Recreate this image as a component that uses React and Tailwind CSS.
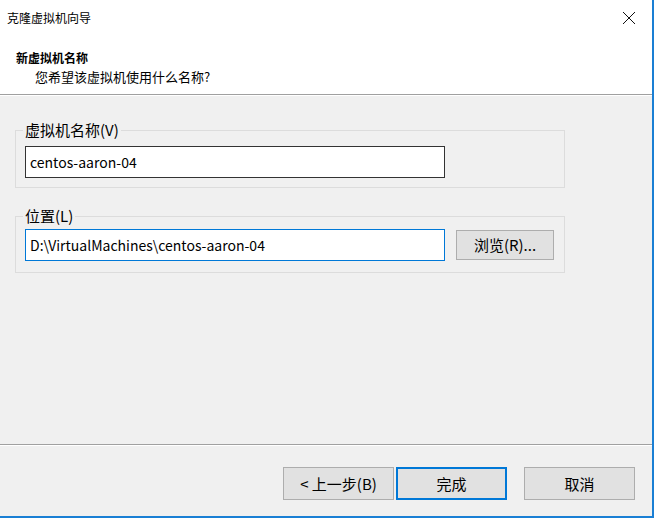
import React from "react";

const font = "font-['Noto_Sans_CJK_SC',sans-serif]";

const CloseIcon = () => (
  <svg width="14" height="14" viewBox="0 0 14 14" className="block">
    <path d="M1 1 L13 13 M13 1 L1 13" stroke="#111" strokeWidth="1" fill="none" />
  </svg>
);

const GroupBox = ({ label, children, gap = "mt-[6px]", bottom = "pb-[9px]" }) => (
  <fieldset className={`ml-[15px] w-[550px] border border-[#dcdcdc] px-[9px] pt-0 ${bottom}`}>
    <legend className="ml-[-2px] px-[2px] text-[15px] leading-[20px] text-[#000]">
      {label}
    </legend>
    <div className={gap}>{children}</div>
  </fieldset>
);

const Button = ({ children, primary, className = "" }) => (
  <button
    className={`flex items-center justify-center bg-[#e1e1e1] text-[15px] leading-[20px] text-black ${
      primary ? "border-2 border-[#0078d7]" : "border border-[#adadad]"
    } ${className}`}
  >
    {children}
  </button>
);

export default function App() {
  return (
    <div
      className={`${font} flex h-[518px] w-[654px] flex-col overflow-hidden border-r-2 border-b-2 border-r-[#1a7fd4] border-b-[#1a7fd4] bg-[#f0f0f0]`}
    >
      {/* title + header */}
      <div className="h-[94px] bg-white">
        <div className="flex h-[36px] items-center justify-between pl-[7px] pr-[16px]">
          <span className="text-[12px] leading-none text-black">克隆虚拟机向导</span>
          <CloseIcon />
        </div>
        <div className="mt-[13px] pl-[16px] text-[12px] font-bold leading-[18px] text-black">
          新虚拟机名称
        </div>
        <div className="mt-[1px] pl-[35px] text-[13px] leading-[18px] text-black">
          您希望该虚拟机使用什么名称?
        </div>
      </div>
      <div className="h-px bg-[#a0a0a0]" />
      <div className="h-px bg-white" />

      {/* body */}
      <div className="flex-1">
        <div className="mt-[24px]">
          <GroupBox label="虚拟机名称(V)">
            <div className="flex h-[32px] w-[420px] items-center border border-[#333] bg-white pl-[4px] text-[14px] leading-[20px] text-black">
              centos-aaron-04
            </div>
          </GroupBox>
        </div>
        <div className="mt-[18px]">
          <GroupBox label="位置(L)" gap="mt-[3px]" bottom="pb-[11px]">
            <div className="flex items-center">
              <div className="flex h-[32px] w-[420px] items-center border border-[#0078d7] bg-white pl-[4px] text-[14px] leading-[20px] text-black">
                D:\VirtualMachines\centos-aaron-04
              </div>
              <Button className="ml-[11px] h-[30px] w-[98px]">浏览(R)...</Button>
            </div>
          </GroupBox>
        </div>
      </div>

      {/* footer */}
      <div className="h-px bg-[#a0a0a0]" />
      <div className="h-px bg-white" />
      <div className="flex h-[70px] items-start justify-end pr-[17px] pt-[21px]">
        <Button className="h-[33px] w-[111px]">&lt;&nbsp;上一步(B)</Button>
        <Button primary className="ml-[2px] h-[33px] w-[111px]">完成</Button>
        <Button className="ml-[17px] h-[33px] w-[111px]">取消</Button>
      </div>
    </div>
  );
}
